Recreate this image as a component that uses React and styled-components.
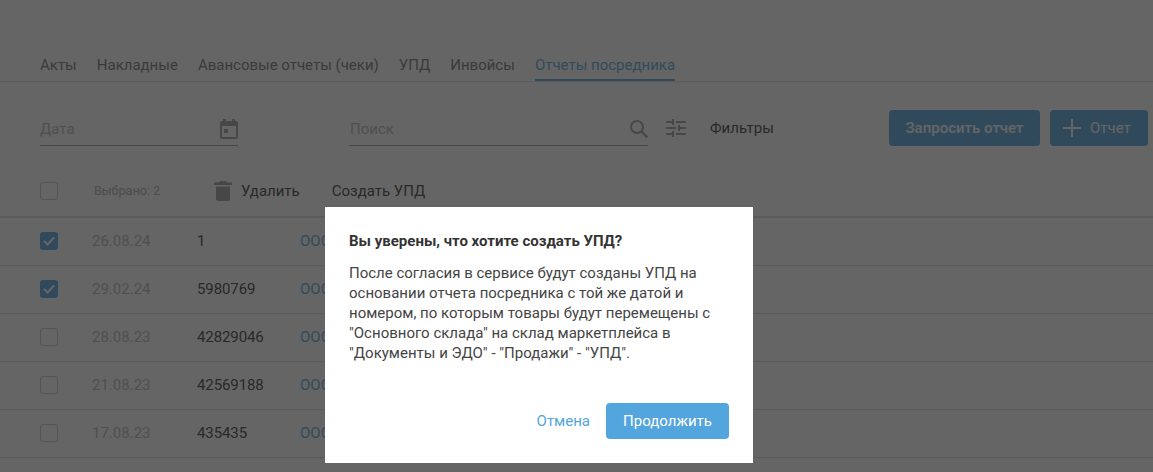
import React from "react";
import styled, { createGlobalStyle } from "styled-components";

const GlobalStyle = createGlobalStyle`
  html, body {
    margin: 0;
    padding: 0;
    height: 100%;
    overflow: hidden;
    background: #fff;
    font-family: Roboto, "Noto Sans", sans-serif;
    color: #333;
  }
`;

const Page = styled.div`
  position: relative;
  height: 472px;
  overflow: hidden;
  padding-top: 51px;
  box-sizing: border-box;
`;

// Tabs
const Tabs = styled.div`
  display: flex;
  gap: 20px;
  padding-left: 40px;
  border-bottom: 1px solid #dcdcdc;
  height: 30px;
`;

const Tab = styled.div`
  font-size: 15px;
  line-height: 28px;
  height: 30px;
  box-sizing: border-box;
  color: ${(props) => (props.active ? "#53a5dd" : "#707070")};
  border-bottom: ${(props) => (props.active ? "2px solid #53a5dd" : "none")};
`;

// Filter row
const FilterRow = styled.div`
  display: flex;
  align-items: flex-start;
  padding: 28px 5px 0 40px;
  height: 36px;
`;

const Field = styled.div`
  display: flex;
  align-items: center;
  justify-content: space-between;
  width: ${(props) => props.width}px;
  height: 36px;
  padding: 3px 0 0 ${(props) => props.inset || 0}px;
  box-sizing: border-box;
  border-bottom: 1px solid #999;
  margin-right: ${(props) => props.gap || 0}px;
  font-size: 15px;
  color: #b4b4b4;
`;

const FiltersLabel = styled.div`
  font-size: 15px;
  color: #333;
  line-height: 36px;
  margin-left: 24px;
  margin-right: auto;
`;

const FilterIcon = styled.div`
  display: flex;
  align-items: center;
  height: 36px;
  margin-left: 18px;
`;

const Button = styled.div`
  display: flex;
  align-items: center;
  justify-content: center;
  gap: 8px;
  height: 36px;
  width: ${(props) => props.width}px;
  margin-left: ${(props) => props.gap || 0}px;
  box-sizing: border-box;
  border-radius: 4px;
  background: #53a5dd;
  color: #fff;
  font-size: 15px;
  font-weight: 500;
`;

const IconButton = styled(Button)`
  justify-content: flex-start;
  padding-left: 13px;
  gap: 9px;
  font-weight: 400;
`;

// Table
const ActionRow = styled.div`
  display: flex;
  align-items: center;
  height: 53px;
  margin-top: 19px;
  padding-left: 40px;
  border-bottom: 2px solid #dcdcdc;
  box-sizing: border-box;
`;

const Selected = styled.div`
  font-size: 12.6px;
  color: #aaa;
  margin-left: 36px;
  width: 120px;
`;

const ActionText = styled.div`
  font-size: 15px;
  color: #333;
  margin-left: ${(props) => props.gap || 0}px;
`;

const Row = styled.div`
  display: grid;
  grid-template-columns: 52px 105px 103px 1fr;
  align-items: center;
  height: 48px;
  padding: 0 0 1px 40px;
  box-sizing: border-box;
  border-bottom: 1px solid #dcdcdc;
  font-size: 15px;
`;

const Check = styled.div`
  display: flex;
  align-items: center;
  justify-content: center;
  width: 18px;
  height: 18px;
  box-sizing: border-box;
  border-radius: 3px;
  border: ${(props) => (props.checked ? "none" : "1px solid #c8c8c8")};
  background: ${(props) => (props.checked ? "#53a5dd" : "#fff")};
`;

const DateCell = styled.div`
  color: #b4b4b4;
`;

const NumberCell = styled.div`
  letter-spacing: -0.1px;
`;

const LinkCell = styled.div`
  color: #53a5dd;
`;

// Modal
const Overlay = styled.div`
  position: absolute;
  inset: 0;
  background: rgba(36, 36, 36, 0.7);
`;

const Modal = styled.div`
  position: absolute;
  left: 325px;
  top: 207px;
  width: 428px;
  height: 256px;
  box-sizing: border-box;
  padding: 24px;
  background: #fff;
  display: flex;
  flex-direction: column;
`;

const ModalTitle = styled.div`
  font-size: 15px;
  font-weight: 700;
  line-height: 20px;
  color: #333;
`;

const ModalText = styled.div`
  font-size: 15px;
  line-height: 20px;
  color: #444;
  margin-top: 12px;
`;

const ModalFooter = styled.div`
  display: flex;
  align-items: center;
  justify-content: flex-end;
  gap: 16px;
  margin-top: auto;
`;

const CancelLink = styled.div`
  font-size: 15px;
  color: #53a5dd;
`;

const ConfirmButton = styled(Button)`
  width: 123px;
  font-weight: 400;
`;

const CalendarIcon = () => (
  <svg width="18" height="20" viewBox="0 0 18 20" fill="#999">
    <path fillRule="evenodd" d="M3 0h3v2h6V0h3v2h1a2 2 0 0 1 2 2v14a2 2 0 0 1-2 2H2a2 2 0 0 1-2-2V4a2 2 0 0 1 2-2h1V0zM2 7v10.500c0 .3.200.5.500.5h13c.3 0 .500-.2.500-.5V7H2zM4 10h4v4H4z" />
  </svg>
);

const SearchIcon = () => (
  <svg width="18" height="18" viewBox="0 0 18 18" fill="none" stroke="#999" strokeWidth="2">
    <circle cx="7" cy="7" r="6" />
    <path d="M11.500 11.500L17.300 17.300" strokeWidth="2.400" />
  </svg>
);

const SlidersIcon = () => (
  <svg width="20" height="18" viewBox="0 0 20 18" fill="none" stroke="#999" strokeWidth="2">
    <path d="M0 3h6M10 3h10M7 0v6M0 9h10M14 9h6M13 6v6M0 15h6M10 15h10M7 12v6" />
  </svg>
);

const PlusIcon = () => (
  <svg width="18" height="18" viewBox="0 0 18 18" fill="none" stroke="#fff" strokeWidth="2">
    <path d="M9 0v18M0 9h18" />
  </svg>
);

const TrashIcon = () => (
  <svg width="18" height="20" viewBox="0 0 18 20" fill="#999">
    <path d="M6 0h6l1 1.500h5V4H0V1.500h5L6 0zM2 5.500h14V18a2 2 0 0 1-2 2H4a2 2 0 0 1-2-2V5.500z" />
  </svg>
);

const CheckMark = () => (
  <svg width="12" height="10" viewBox="0 0 12 10" fill="none" stroke="#fff" strokeWidth="2">
    <path d="M1 5l3.500 3.500L11 1.500" />
  </svg>
);

const tabs = ["Акты", "Накладные", "Авансовые отчеты (чеки)", "УПД", "Инвойсы", "Отчеты посредника"];

const rows = [
  { date: "26.08.24", number: "1", checked: true },
  { date: "29.02.24", number: "5980769", checked: true },
  { date: "28.08.23", number: "42829046" },
  { date: "21.08.23", number: "42569188" },
  { date: "17.08.23", number: "435435" },
];

const App = () => {
  return (
    <Page>
      <GlobalStyle />
      <Tabs>
        {tabs.map((tab) => (
          <Tab key={tab} active={tab === "Отчеты посредника"}>{tab}</Tab>
        ))}
      </Tabs>
      <FilterRow>
        <Field width={198} gap={111}>
          Дата
          <CalendarIcon />
        </Field>
        <Field width={299} inset={1}>
          Поиск
          <SearchIcon />
        </Field>
        <FilterIcon><SlidersIcon /></FilterIcon>
        <FiltersLabel>Фильтры</FiltersLabel>
        <Button width={151}>Запросить отчет</Button>
        <IconButton width={98} gap={10}><PlusIcon /> Отчет</IconButton>
      </FilterRow>
      <ActionRow>
        <Check />
        <Selected>Выбрано: 2</Selected>
        <TrashIcon />
        <ActionText gap={9}>Удалить</ActionText>
        <ActionText gap={32}>Создать УПД</ActionText>
      </ActionRow>
      {rows.map((row) => (
        <Row key={row.date}>
          <Check checked={row.checked}>{row.checked && <CheckMark />}</Check>
          <DateCell>{row.date}</DateCell>
          <NumberCell>{row.number}</NumberCell>
          <LinkCell>ООО</LinkCell>
        </Row>
      ))}
      <Overlay />
      <Modal>
        <ModalTitle>Вы уверены, что хотите создать УПД?</ModalTitle>
        <ModalText>
          После согласия в сервисе будут созданы УПД на основании отчета посредника с той же датой и
          номером, по которым товары будут перемещены с "Основного склада" на склад маркетплейса в
          "Документы и ЭДО" - "Продажи" - "УПД".
        </ModalText>
        <ModalFooter>
          <CancelLink>Отмена</CancelLink>
          <ConfirmButton>Продолжить</ConfirmButton>
        </ModalFooter>
      </Modal>
    </Page>
  );
};

export default App;
